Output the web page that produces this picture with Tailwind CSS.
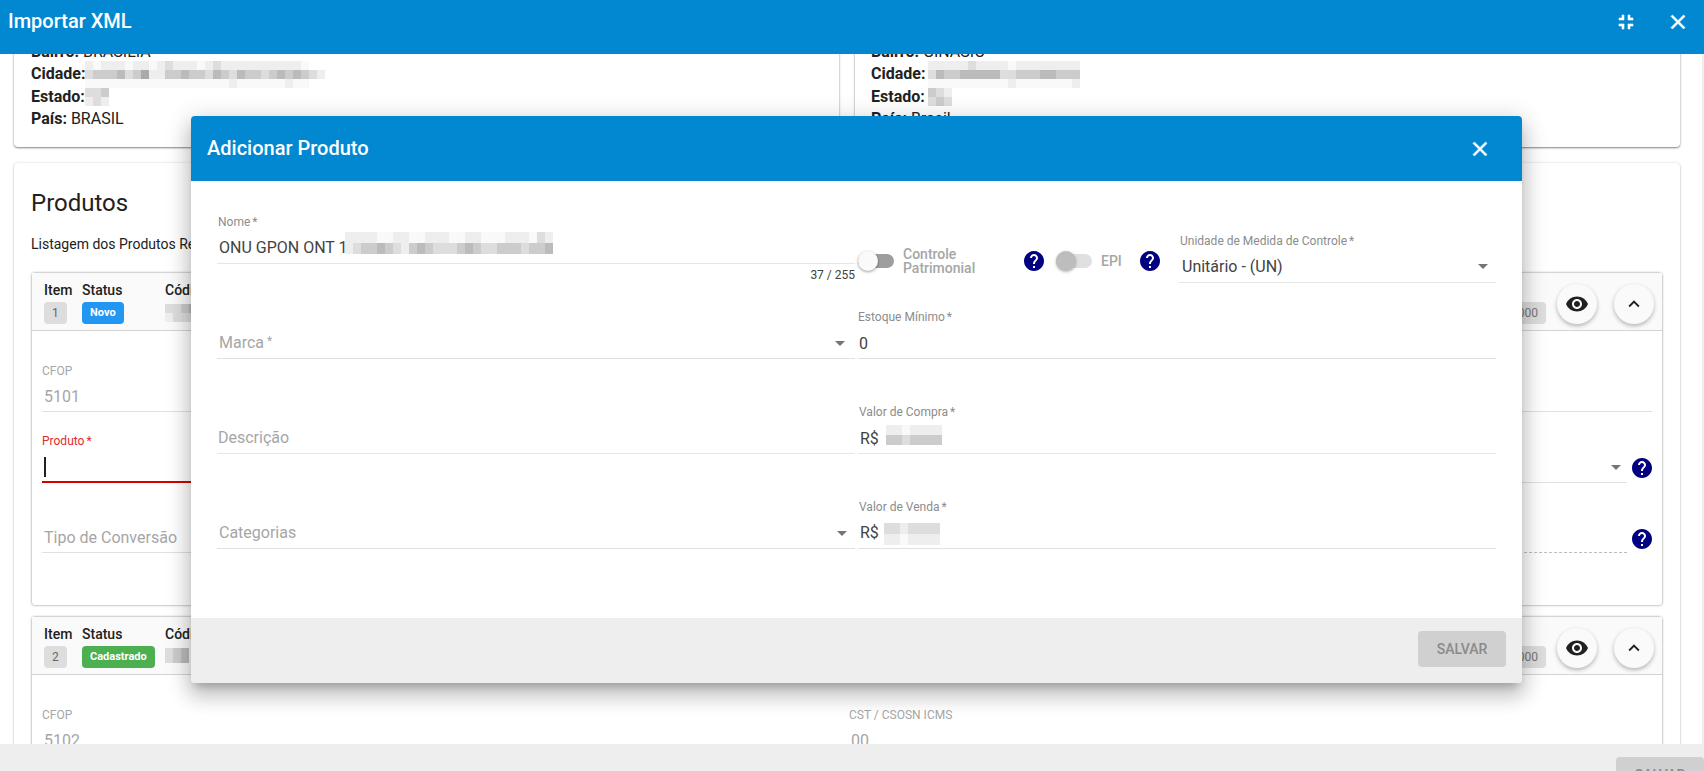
<!DOCTYPE html>
<html lang="pt-BR">
<head>
<meta charset="utf-8">
<title>Importar XML</title>
<meta name="viewport" content="width=device-width, initial-scale=1">
<script src="https://cdn.jsdelivr.net/npm/@tailwindcss/browser@4"></script>
</head>
<body class="relative flex h-screen flex-col overflow-hidden bg-white font-[Roboto,sans-serif] text-base text-[#212121]">

<svg class="hidden" aria-hidden="true">
  <symbol id="close" viewBox="0 0 24 24"><path stroke="currentColor" stroke-width=".6" d="M19 6.41L17.59 5 12 10.59 6.41 5 5 6.41 10.59 12 5 17.59 6.41 19 12 13.41 17.59 19 19 17.59 13.41 12z"/></symbol>
  <symbol id="fullscreen-exit" viewBox="0 0 24 24"><path stroke="currentColor" stroke-width=".6" d="M5 16h3v3h2v-5H5v2zm3-8H5v2h5V5H8v3zm6 11h2v-3h3v-2h-5v5zm2-11V5h-2v5h5V8h-3z"/></symbol>
  <symbol id="help" viewBox="0 0 24 24"><path d="M12 2C6.48 2 2 6.48 2 12s4.480 10 10 10 10-4.480 10-10S17.520 2 12 2zm1 17h-2v-2h2v2zm2.070-7.750l-.9.920C13.450 12.900 13 13.500 13 15h-2v-.5c0-1.100.45-2.100 1.170-2.830l1.240-1.260c.37-.36.59-.86.59-1.410 0-1.100-.9-2-2-2s-2 .9-2 2H8c0-2.210 1.790-4 4-4s4 1.790 4 4c0 .88-.36 1.680-.93 2.250z"/></symbol>
  <symbol id="eye" viewBox="0 0 24 24"><path d="M12 4.500C7 4.500 2.730 7.610 1 12c1.730 4.390 6 7.500 11 7.500s9.270-3.110 11-7.500c-1.730-4.390-6-7.500-11-7.500zM12 17c-2.760 0-5-2.240-5-5s2.240-5 5-5 5 2.240 5 5-2.240 5-5 5zm0-8c-1.660 0-3 1.340-3 3s1.340 3 3 3 3-1.340 3-3-1.340-3-3-3z"/></symbol>
  <symbol id="chevron-up" viewBox="0 0 24 24"><path d="M12 8l-6 6 1.410 1.410L12 10.830l4.590 4.580L18 14z"/></symbol>
  <symbol id="caret" viewBox="0 0 10 5"><path d="M0 0h10L5 5z"/></symbol>
</svg>

<header class="flex h-[54px] shrink-0 items-start justify-between bg-[#0288d1] pl-2 pr-3.5 text-white">
  <h1 class="pt-[7px] text-xl font-medium leading-7">Importar XML</h1>
  <div class="flex gap-7 pt-2.5">
    <button type="button" aria-label="Sair da tela cheia"><svg class="size-6 fill-current"><use href="#fullscreen-exit"/></svg></button>
    <button type="button" aria-label="Fechar importação"><svg class="size-6 fill-current"><use href="#close"/></svg></button>
  </div>
</header>

<main class="min-h-0 flex-1 overflow-hidden border-r-2 border-[#eeeeee] pl-3.5 pr-[22px]">
  <div class="-mt-[29px] grid grid-cols-2 gap-4">
    <section class="rounded-sm px-[17px] pb-[17px] pt-4 shadow-[0_1px_2px_rgba(0,0,0,0.45),0_0_3px_rgba(0,0,0,0.12)]">
      <p class="flex h-[22px] items-center gap-1"><b class="font-bold">Bairro:</b> BRASILIA</p>
      <p class="flex h-[22px] items-center"><b class="font-bold">Cidade:</b><span class="mosaic flex flex-col" data-h="9" data-rows="efeeefeefedeeefedeeeeeeeeeef/dcccbdcaeeccbccdbcdbccdcbcbcde/ffffffffffffffffffeffffffeff"></span></p>
      <p class="flex h-[23px] items-center"><b class="font-bold">Estado:</b><span class="mosaic flex flex-col" data-h="9" data-rows="ddc/ede"></span></p>
      <p class="flex h-[22px] items-center gap-1"><b class="font-bold">País:</b> BRASIL</p>
    </section>
    <section class="rounded-sm px-4 pb-[17px] pt-4 shadow-[0_1px_2px_rgba(0,0,0,0.45),0_0_3px_rgba(0,0,0,0.12)]">
      <p class="flex h-[22px] items-center gap-1"><b class="font-bold">Bairro:</b> GINÁSIO</p>
      <p class="flex h-[22px] items-center gap-[3px]"><b class="font-bold">Cidade:</b><span class="mosaic flex flex-col" data-h="9" data-rows="eeeeedeeeefeeeeeeee/dbccbbbbbddcccbbccc/ffffffffffefffffffe"></span></p>
      <p class="flex h-[23px] items-center gap-[3px]"><b class="font-bold">Estado:</b><span class="mosaic flex flex-col" data-h="9" data-rows="cde/dcd"></span></p>
      <p class="flex h-[22px] items-center gap-1"><b class="font-bold">País:</b> Brasil</p>
    </section>
  </div>

  <section class="mt-4 rounded-sm px-[17px] pb-6 pt-6 shadow-[0_1px_2px_rgba(0,0,0,0.25),0_0_3px_rgba(0,0,0,0.12)]">
    <h2 class="text-2xl leading-8">Produtos</h2>
    <p class="mt-[15px] text-sm">Listagem dos Produtos Recebidos</p>

    <article class="mt-[18px] min-h-[334px] rounded-sm border border-[#d4d4d4] shadow-[0_0_2px_rgba(0,0,0,0.2)]">
      <div class="flex h-[58px] items-start border-b border-[#d4d4d4] bg-[#fafafa] pl-3 pr-2 text-sm">
        <div class="w-[38px]"><div class="pt-[7px] font-medium">Item</div><span class="mt-0.5 inline-block h-[22px] rounded bg-[#dddddd] px-2 text-xs leading-[22px] text-[#666666]">1</span></div>
        <div class="w-[83px]"><div class="pt-[7px] font-medium">Status</div><span class="mt-0.5 inline-block h-[22px] rounded bg-[#2196f3] px-2 text-[11px] font-bold leading-[22px] text-white">Novo</span></div>
        <div class="flex-1"><div class="pt-[7px] font-medium">Código</div><span class="mosaic mt-1 flex flex-col" data-h="9" data-rows="ddcbcd/edddcd"></span></div>
        <span class="mt-[29px] h-[22px] rounded bg-[#dddddd] px-2 text-xs leading-[22px] text-[#777777]">1,0000</span>
        <button type="button" aria-label="Visualizar item 1" class="ml-[11px] mt-[11px] grid size-10 place-items-center rounded-full bg-[#fafafa] shadow-[0_2px_4px_rgba(0,0,0,0.28)]"><svg class="size-6 fill-current"><use href="#eye"/></svg></button>
        <button type="button" aria-label="Recolher item 1" class="ml-[17px] mt-[11px] grid size-10 place-items-center rounded-full bg-[#fafafa] shadow-[0_2px_4px_rgba(0,0,0,0.28)]"><svg class="size-[22px] fill-current"><use href="#chevron-up"/></svg></button>
      </div>
      <div class="flex flex-col gap-[21px] pl-2.5 pr-2.5 pt-8">
        <div class="grid grid-cols-2">
          <div class="flex flex-col"><label for="cfop1" class="h-4 text-xs text-[#a6a6a6]">CFOP</label><input id="cfop1" disabled value="5101" class="h-[33px] border-b border-[#e0e0e0] pl-0.5 pt-0.5 text-[#a6a6a6]"></div>
          <div class="flex flex-col"><label for="cst1" class="h-4 pl-0.5 text-xs text-[#a6a6a6]">CST / CSOSN ICMS</label><input id="cst1" disabled value="00" class="h-[33px] border-b border-[#e0e0e0] pl-1 pt-0.5 text-[#a6a6a6]"></div>
        </div>
        <div class="flex">
          <div class="flex flex-1 flex-col">
            <label for="produto" class="h-4 text-xs text-[#dd2c2c]">Produto<span class="ml-0.5">*</span></label>
            <div class="grid h-[34px] items-center border-b-2 border-[#d50000]">
              <input id="produto" class="col-start-1 row-start-1 h-full outline-none">
              <span class="col-start-1 row-start-1 ml-0.5 mt-1 h-5 w-0.5 bg-[#212121]"></span>
            </div>
          </div>
          <div class="flex flex-1 flex-col">
            <label for="unidade1" class="h-4 text-xs text-[#a6a6a6]">Unidade de Medida<span class="ml-0.5">*</span></label>
            <div class="grid h-[34px] items-center border-b border-[#e0e0e0]">
              <select id="unidade1" class="col-start-1 row-start-1 h-full appearance-none"><option></option></select>
              <svg class="pointer-events-none col-start-1 row-start-1 mr-1.5 mt-1 h-[5px] w-2.5 justify-self-end fill-[#757575]"><use href="#caret"/></svg>
            </div>
          </div>
          <button type="button" aria-label="Ajuda sobre unidade" class="-mr-0.5 ml-[3px] mt-[23px] size-6 self-start"><svg class="size-6 fill-[#000080]"><use href="#help"/></svg></button>
        </div>
        <div class="flex">
          <div class="grid h-[49px] flex-1 border-b border-[#e0e0e0]">
            <label for="conversao" class="pointer-events-none col-start-1 row-start-1 self-end pb-0.5 pl-0.5 text-[#a6a6a6]">Tipo de Conversão</label>
            <select id="conversao" class="col-start-1 row-start-1 mt-4 appearance-none"><option></option></select>
          </div>
          <div class="grid h-[49px] flex-1 border-b border-dashed border-[#bdbdbd]"><input aria-label="Fator de conversão" disabled class="mt-4"></div>
          <button type="button" aria-label="Ajuda sobre conversão" class="-mr-0.5 ml-[3px] mt-[23px] size-6 self-start"><svg class="size-6 fill-[#000080]"><use href="#help"/></svg></button>
        </div>
      </div>
    </article>

    <article class="mt-2.5 min-h-[334px] rounded-sm border border-[#d4d4d4] shadow-[0_0_2px_rgba(0,0,0,0.2)]">
      <div class="flex h-[58px] items-start border-b border-[#d4d4d4] bg-[#fafafa] pl-3 pr-2 text-sm">
        <div class="w-[38px]"><div class="pt-[7px] font-medium">Item</div><span class="mt-0.5 inline-block h-[22px] rounded bg-[#dddddd] px-2 text-xs leading-[22px] text-[#666666]">2</span></div>
        <div class="w-[83px]"><div class="pt-[7px] font-medium">Status</div><span class="mt-0.5 inline-block h-[22px] rounded bg-[#4caf50] px-2 text-[11px] font-bold leading-[22px] text-white">Cadastrado</span></div>
        <div class="flex-1"><div class="pt-[7px] font-medium">Código</div><span class="mosaic mt-1 flex flex-col" data-h="15" data-rows="dcb"></span></div>
        <span class="mt-[29px] h-[22px] rounded bg-[#dddddd] px-2 text-xs leading-[22px] text-[#777777]">1,0000</span>
        <button type="button" aria-label="Visualizar item 2" class="ml-[11px] mt-[11px] grid size-10 place-items-center rounded-full bg-[#fafafa] shadow-[0_2px_4px_rgba(0,0,0,0.28)]"><svg class="size-6 fill-current"><use href="#eye"/></svg></button>
        <button type="button" aria-label="Recolher item 2" class="ml-[17px] mt-[11px] grid size-10 place-items-center rounded-full bg-[#fafafa] shadow-[0_2px_4px_rgba(0,0,0,0.28)]"><svg class="size-[22px] fill-current"><use href="#chevron-up"/></svg></button>
      </div>
      <div class="grid grid-cols-2 pl-2.5 pr-2.5 pt-8">
        <div class="flex flex-col"><label for="cfop2" class="h-4 text-xs text-[#a6a6a6]">CFOP</label><input id="cfop2" disabled value="5102" class="h-[33px] border-b border-[#e0e0e0] pl-0.5 pt-0.5 text-[#a6a6a6]"></div>
        <div class="flex flex-col"><label for="cst2" class="h-4 pl-0.5 text-xs text-[#a6a6a6]">CST / CSOSN ICMS</label><input id="cst2" disabled value="00" class="h-[33px] border-b border-[#e0e0e0] pl-1 pt-0.5 text-[#a6a6a6]"></div>
      </div>
    </article>
  </section>
</main>

<footer class="flex h-[27px] shrink-0 items-start justify-end overflow-hidden bg-[#eeeeee] pt-[13px]">
  <button type="button" disabled class="h-9 w-[88px] shrink-0 rounded-sm bg-[#d0d0d0] text-sm font-medium leading-[34px] text-[#8a8a8a]">SALVAR</button>
</footer>

<div class="absolute inset-0 flex items-start pl-[191px] pr-[182px] pt-[116px]">
  <div role="dialog" aria-labelledby="dlg-title" class="flex-1 overflow-hidden rounded bg-white shadow-[0_7px_8px_-4px_rgba(0,0,0,0.2),0_13px_19px_2px_rgba(0,0,0,0.14),0_5px_24px_4px_rgba(0,0,0,0.14)]">
    <header class="flex h-[65px] items-center justify-between bg-[#0288d1] pl-4 pr-[30px] text-white">
      <h2 id="dlg-title" class="pb-0.5 text-xl font-medium">Adicionar Produto</h2>
      <button type="button" aria-label="Fechar"><svg class="size-6 fill-current"><use href="#close"/></svg></button>
    </header>

    <form class="grid grid-cols-2 gap-x-[3px] gap-y-[46px] px-[26px] pb-[69px] pt-[34px] text-[#424242]">
      <div class="flex h-[49px] flex-col">
        <label for="nome" class="h-4 shrink-0 pl-px text-xs leading-[14px] text-[#8c8c8c]">Nome<span class="ml-0.5">*</span></label>
        <div class="grid h-[33px] shrink-0 border-b border-[#e6e6e6]">
          <input id="nome" value="ONU GPON ONT 1" class="col-start-1 row-start-1 pl-0.5 pt-0.5">
          <span class="mosaic pointer-events-none col-start-1 row-start-1 ml-[128px] mt-px flex flex-col justify-self-start" data-h="11" data-rows="eeeeffeeffeeeffeefffeeefde/edccbcdecbcdddcbcddcccdccb"></span>
        </div>
        <span class="pt-1 text-right text-xs leading-[14px]">37 / 255</span>
      </div>
      <div class="grid h-[49px] grid-cols-2 gap-1">
        <div class="mt-8 flex h-7 items-center pr-[13px] text-sm font-medium leading-[14px] text-[#a6a6a6]">
          <input id="controle" type="checkbox" role="switch" class="h-3.5 w-9 shrink-0 appearance-none rounded-full bg-[#9e9e9e] before:-mt-[3px] before:block before:size-5 before:rounded-full before:bg-[#fafafa] before:shadow-[0_1px_3px_rgba(0,0,0,0.4)] before:content-['']">
          <label for="controle" class="flex-1 pl-[9px]">Controle<br>Patrimonial</label>
          <button type="button" aria-label="Ajuda sobre controle patrimonial" class="mr-2.5"><svg class="size-6 fill-[#000080]"><use href="#help"/></svg></button>
          <input id="epi" type="checkbox" role="switch" disabled class="h-3.5 w-9 shrink-0 appearance-none rounded-full bg-[#e0e0e0] before:-mt-[3px] before:block before:size-5 before:rounded-full before:bg-[#bdbdbd] before:shadow-[0_1px_3px_rgba(0,0,0,0.3)] before:content-['']">
          <label for="epi" class="w-[46px] pl-[9px]">EPI</label>
          <button type="button" aria-label="Ajuda sobre EPI"><svg class="size-6 fill-[#000080]"><use href="#help"/></svg></button>
        </div>
        <div class="flex flex-col pt-[19px]">
          <label for="medida" class="h-4 shrink-0 pl-px text-xs leading-[14px] text-[#8c8c8c]">Unidade de Medida de Controle<span class="ml-0.5">*</span></label>
          <div class="grid h-[33px] shrink-0 items-center border-b border-[#e6e6e6]">
            <select id="medida" class="col-start-1 row-start-1 h-full appearance-none pl-[3px] pt-0.5"><option>Unitário - (UN)</option></select>
            <svg class="pointer-events-none col-start-1 row-start-1 mr-2 mt-px h-[5px] w-2.5 justify-self-end fill-[#757575]"><use href="#caret"/></svg>
          </div>
        </div>
      </div>

      <div class="grid h-[49px] border-b border-[#e0e0e0]">
        <label for="marca" class="pointer-events-none col-start-1 row-start-1 self-end pb-[3px] pl-0.5 text-[#a6a6a6]">Marca<span class="ml-[3px] align-[3px] text-xs">*</span></label>
        <select id="marca" class="col-start-1 row-start-1 mt-4 appearance-none"><option></option></select>
        <svg class="pointer-events-none col-start-1 row-start-1 mb-3 mr-2.5 h-[5px] w-2.5 self-end justify-self-end fill-[#757575]"><use href="#caret"/></svg>
      </div>
      <div class="flex flex-col">
        <label for="estoque" class="h-4 text-xs leading-[14px] text-[#8c8c8c]">Estoque Mínimo<span class="ml-0.5">*</span></label>
        <input id="estoque" value="0" class="h-[33px] border-b border-[#e0e0e0] pl-px pt-0.5">
      </div>

      <div class="grid h-[49px] border-b border-[#e6e6e6]">
        <label for="descricao" class="pointer-events-none col-start-1 row-start-1 self-end pb-[3px] pl-px text-[#a6a6a6]">Descrição</label>
        <input id="descricao" class="col-start-1 row-start-1 mt-4">
      </div>
      <div class="flex flex-col">
        <label for="compra" class="h-4 pl-px text-xs leading-[14px] text-[#8c8c8c]">Valor de Compra<span class="ml-0.5">*</span></label>
        <div class="grid h-[33px] border-b border-[#e6e6e6]">
          <input id="compra" value="R$" class="col-start-1 row-start-1 pl-0.5 pt-1">
          <span class="mosaic pointer-events-none col-start-1 row-start-1 ml-7 mt-1 flex flex-col justify-self-start" data-h="10" data-rows="eefeeee/ccdcccc"></span>
        </div>
      </div>

      <div class="grid h-[49px] border-b border-[#e0e0e0]">
        <label for="categorias" class="pointer-events-none col-start-1 row-start-1 self-end pb-[3px] pl-0.5 text-[#a6a6a6]">Categorias</label>
        <select id="categorias" class="col-start-1 row-start-1 mt-4 appearance-none"><option></option></select>
        <svg class="pointer-events-none col-start-1 row-start-1 mb-3 mr-2 h-[5px] w-2.5 self-end justify-self-end fill-[#757575]"><use href="#caret"/></svg>
      </div>
      <div class="flex flex-col">
        <label for="venda" class="h-4 pl-px text-xs leading-[14px] text-[#8c8c8c]">Valor de Venda<span class="ml-0.5">*</span></label>
        <div class="grid h-[33px] border-b border-[#e0e0e0]">
          <input id="venda" value="R$" class="col-start-1 row-start-1 pl-0.5 pt-0.5">
          <span class="mosaic pointer-events-none col-start-1 row-start-1 ml-[26px] mt-[7px] flex flex-col justify-self-start" data-h="11" data-rows="ddedddd/eefeeee"></span>
        </div>
      </div>
    </form>

    <footer class="flex h-[65px] items-start justify-end bg-[#eeeeee] pr-4 pt-[13px]">
      <button type="submit" disabled class="h-9 w-[88px] rounded-sm bg-[#d0d0d0] text-sm font-medium leading-[34px] text-[#8a8a8a]">SALVAR</button>
    </footer>
  </div>
</div>

<script>
  // Pixelated blocks over private values: each hex digit is the grey of one cell.
  document.querySelectorAll('.mosaic').forEach(function (el) {
    el.dataset.rows.split('/').forEach(function (row) {
      var line = document.createElement('span');
      line.style.display = 'flex';
      line.style.height = el.dataset.h + 'px';
      row.split('').forEach(function (d) {
        var cell = document.createElement('span');
        cell.style.width = '8px';
        cell.style.background = d === 'f' ? '#f9f9f9' : '#' + d + d + d;
        line.appendChild(cell);
      });
      el.appendChild(line);
    });
  });
</script>
</body>
</html>
